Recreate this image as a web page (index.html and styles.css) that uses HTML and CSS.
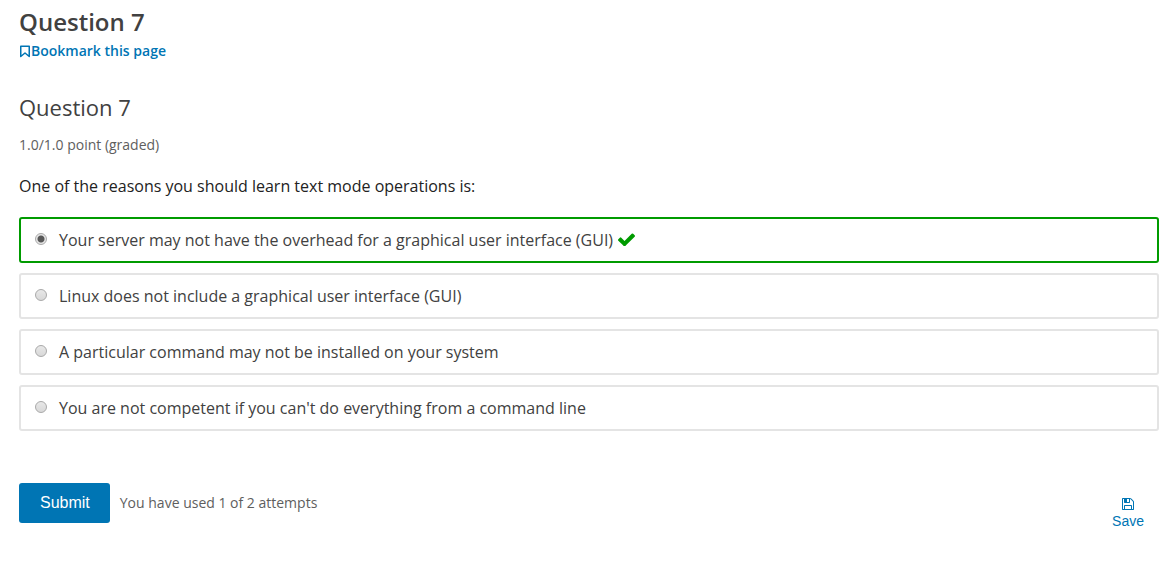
FILE: index.html
```html
<!DOCTYPE html>
<html lang="en">
<head>
<meta charset="utf-8">
<title>Question 7</title>
<link rel="stylesheet" href="styles.css">
</head>
<body>
<main class="unit">
  <h1 class="unit-title">Question 7</h1>
  <a class="bookmark" href="#bookmark">
    <svg class="bookmark-icon" viewBox="0 0 12 13" aria-hidden="true"><path d="M1.750 1.250H10.250V11.500L6 8L1.750 11.500Z"/></svg>Bookmark this page</a>

  <form class="problem">
    <h2 class="problem-title">Question 7</h2>
    <p class="progress">1.0/1.0 point (graded)</p>
    <fieldset class="choices">
      <legend class="prompt">One of the reasons you should learn text mode operations is:</legend>
      <label class="choice choice-correct" for="choice-1">
        <input class="radio" type="radio" name="answer" id="choice-1" checked>
        <span>Your server may not have the overhead for a graphical user interface (GUI)</span>
        <svg class="check-icon" viewBox="121 298 1550 1190" role="img" aria-label="correct"><path d="M1671 566q0 40-28 68l-724 724-136 136q-28 28-68 28t-68-28l-136-136-362-362q-28-28-28-68t28-68l136-136q28-28 68-28t68 28l294 295 656-657q28-28 68-28t68 28l136 136q28 28 28 68z"/></svg>
      </label>
      <label class="choice" for="choice-2">
        <input class="radio" type="radio" name="answer" id="choice-2">
        <span>Linux does not include a graphical user interface (GUI)</span>
      </label>
      <label class="choice" for="choice-3">
        <input class="radio" type="radio" name="answer" id="choice-3">
        <span>A particular command may not be installed on your system</span>
      </label>
      <label class="choice" for="choice-4">
        <input class="radio" type="radio" name="answer" id="choice-4">
        <span>You are not competent if you can't do everything from a command line</span>
      </label>
    </fieldset>
    <div class="actions">
      <button class="submit" type="button">Submit</button>
      <span class="attempts">You have used 1 of 2 attempts</span>
      <button class="save" type="button">
        <svg class="save-icon" viewBox="128 128 1536 1536" aria-hidden="true"><path d="M512 1536h768v-384h-768v384zm896 0h128v-896q0-14-10-38.500t-20-34.500l-281-281q-10-10-34-20t-39-10v416q0 40-28 68t-68 28h-576q-40 0-68-28t-28-68v-416h-128v1280h128v-416q0-40 28-68t68-28h832q40 0 68 28t28 68v416zm-384-928v-320q0-13-9.500-22.500t-22.500-9.500h-192q-13 0-22.500 9.500t-9.500 22.500v320q0 13 9.500 22.500t22.500 9.500h192q13 0 22.500-9.500t9.500-22.500zm640 32v928q0 40-28 68t-68 28h-1344q-40 0-68-28t-28-68v-1344q0-40 28-68t68-28h928q40 0 88 20t76 48l280 280q28 28 48 76t20 88z"/></svg>
        Save
      </button>
    </div>
  </form>
</main>
</body>
</html>
```
FILE: styles.css
```css
* {
  box-sizing: border-box;
}

body {
  margin: 0;
  background: #fff;
  color: #414141;
  font-family: "Open Sans", Arial, sans-serif;
  font-size: 16px;
  line-height: 24px;
}

.unit {
  padding: 6px 17px 36px 19px;
}

.unit-title {
  margin: 0;
  font-size: 24px;
  font-weight: 600;
  line-height: 32px;
}

.bookmark {
  display: inline-flex;
  align-items: center;
  margin-top: 1px;
  color: #0075b4;
  font-size: 14px;
  font-weight: 600;
  text-decoration: none;
}

.bookmark-icon {
  width: 12px;
  height: 13px;
  fill: none;
  stroke: currentColor;
  stroke-width: 1.5;
  stroke-linejoin: round;
}

.problem-title {
  margin: 29px 0 12px;
  font-size: 22px;
  font-weight: 400;
  line-height: 28px;
}

.progress {
  margin: 0 0 16px;
  color: #5e5e5e;
  font-size: 14px;
  line-height: 24px;
}

.choices {
  display: flex;
  flex-direction: column;
  gap: 10px;
  margin: 0;
  padding: 0;
  border: 0;
}

.prompt {
  margin-bottom: 18px;
  padding: 0;
  color: #222;
  line-height: 26px;
}

.choice {
  display: flex;
  align-items: center;
  min-height: 46px;
  padding: 8px 14px;
  border: 2px solid #e4e4e4;
  border-radius: 3px;
}

.choice-correct {
  border-color: #009b00;
}

.radio {
  appearance: none;
  flex: none;
  width: 12px;
  height: 12px;
  margin: 0 12px 2px 0;
  border: 1px solid #a9a9a9;
  border-radius: 50%;
  background: linear-gradient(#e8e8e8, #d8d8d8);
}

.radio:checked {
  background: radial-gradient(circle, #585858 0 3px, #e6e6e6 4px);
}

.check-icon {
  width: 17px;
  height: 13px;
  margin-left: 5px;
  fill: #009b00;
}

.actions {
  display: flex;
  align-items: flex-start;
  gap: 10px;
  margin-top: 52px;
}

.submit {
  height: 40px;
  padding: 0 20px 0 21px;
  border: 0;
  border-radius: 3px;
  background: #0075b4;
  color: #fff;
  font: 16px/24px "Liberation Sans", Arial, sans-serif;
}

.attempts {
  color: #5e5e5e;
  font-size: 14px;
  line-height: 40px;
}

.save {
  display: flex;
  flex-direction: column;
  align-items: center;
  gap: 2px;
  margin: 15px 15px 0 auto;
  padding: 0;
  border: 0;
  background: transparent;
  color: #0075b4;
  font: 14px/18px "Liberation Sans", Arial, sans-serif;
}

.save-icon {
  width: 12px;
  height: 12px;
  fill: currentColor;
}
```
